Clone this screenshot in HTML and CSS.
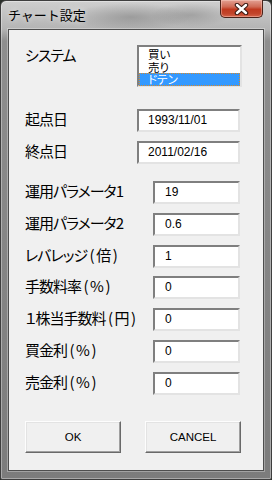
FILE: index.html
```html
<!DOCTYPE html>
<html lang="ja">
<head>
<meta charset="utf-8">
<title>チャート設定</title>
<link rel="stylesheet" href="styles.css">
</head>
<body>
<div class="window">
  <div class="titlebar">
    <span class="title">チャート設定</span>
    <div class="close">
      <svg width="15" height="12" viewBox="0 0 15 12">
        <path d="M3 2 L12 10 M12 2 L3 10" stroke="#3a1a14" stroke-width="4.5" stroke-linecap="round"/>
        <path d="M3 2 L12 10 M12 2 L3 10" stroke="#ffffff" stroke-width="2.4" stroke-linecap="round"/>
      </svg>
    </div>
  </div>
  <div class="client">
    <div class="row row-system">
      <span class="label label-date">システム</span>
      <div class="listbox">
        <div class="item">買い</div>
        <div class="item">売り</div>
        <div class="item selected">ドテン</div>
      </div>
    </div>
    <div class="group group-dates">
      <div class="row">
        <span class="label label-date">起点日</span>
        <div class="field field-date">1993/11/01</div>
      </div>
      <div class="row">
        <span class="label label-date">終点日</span>
        <div class="field field-date">2011/02/16</div>
      </div>
    </div>
    <div class="group group-params">
      <div class="row">
        <span class="label label-param">運用パラメータ1</span>
        <div class="field field-param">19</div>
      </div>
      <div class="row">
        <span class="label label-param">運用パラメータ2</span>
        <div class="field field-param">0.6</div>
      </div>
      <div class="row">
        <span class="label label-param">レバレッジ<span class="paren">(</span>倍<span class="paren">)</span></span>
        <div class="field field-param">1</div>
      </div>
      <div class="row">
        <span class="label label-param">手数料率<span class="paren">(</span>%<span class="paren">)</span></span>
        <div class="field field-param">0</div>
      </div>
      <div class="row">
        <span class="label label-param">１株当手数料<span class="paren">(</span>円<span class="paren">)</span></span>
        <div class="field field-param">0</div>
      </div>
      <div class="row">
        <span class="label label-param">買金利<span class="paren">(</span>%<span class="paren">)</span></span>
        <div class="field field-param">0</div>
      </div>
      <div class="row">
        <span class="label label-param">売金利<span class="paren">(</span>%<span class="paren">)</span></span>
        <div class="field field-param">0</div>
      </div>
    </div>
    <div class="buttons">
      <div class="button">OK</div>
      <div class="button">CANCEL</div>
    </div>
  </div>
</div>
</body>
</html>
```
FILE: styles.css
```css
html, body {
  margin: 0;
  padding: 0;
  width: 272px;
  height: 480px;
  overflow: hidden;
  background: #2a2f2a;
}

.window {
  box-sizing: border-box;
  width: 272px;
  height: 480px;
  display: flex;
  flex-direction: column;
  border: 1px solid #3e3e3e;
  border-radius: 6px 6px 2px 2px;
  background:
    radial-gradient(ellipse 60px 14px at 130px 16px, rgba(90,90,90,0.35), rgba(90,90,90,0)),
    radial-gradient(ellipse 40px 12px at 190px 14px, rgba(90,90,90,0.3), rgba(90,90,90,0)),
    linear-gradient(to bottom, #cfcfcf 0, #b4b4b4 28px, #8e8e8e 40px, #7c7c7c 100%);
  box-shadow: inset 0 0 0 1px rgba(255,255,255,0.35);
}

.titlebar {
  height: 28px;
  display: flex;
  justify-content: space-between;
  align-items: flex-start;
  padding: 0 8px 0 7px;
  flex-shrink: 0;
}

.title {
  margin-top: 6px;
  font-family: "Noto Sans CJK JP", sans-serif;
  font-size: 13px;
  line-height: 15px;
  color: #000;
  text-shadow: 0 0 6px rgba(255,255,255,0.8);
}

.close {
  width: 43px;
  height: 18px;
  margin-top: -1px;
  box-sizing: border-box;
  border: 1px solid #4a2219;
  border-top: none;
  border-radius: 0 0 5px 5px;
  background: linear-gradient(to bottom, #e3a193 0, #cf6a55 40%, #c0391f 55%, #c2452b 80%, #d5634a 100%);
  box-shadow: inset 0 0 0 1px rgba(255,220,210,0.4);
  display: flex;
  align-items: center;
  justify-content: center;
}

.client {
  flex: 1;
  margin: 0 7px 8px 7px;
  background: #f0f0f0;
  border: 1px solid #4e4e4e;
  box-shadow: 0 0 0 1px rgba(255,255,255,0.3);
  padding: 15px 0 0 16px;
  display: flex;
  flex-direction: column;
  font-family: "Noto Sans CJK JP", sans-serif;
}

.row {
  display: flex;
  align-items: flex-start;
}

.label {
  font-size: 15px;
  line-height: 18px;
  padding-top: 1px;
  color: #000;
  font-feature-settings: "palt";
  letter-spacing: -1px;
  white-space: nowrap;
}

.paren {
  margin: 0 2.5px;
}

.label-date {
  width: 112px;
  flex-shrink: 0;
}

.label-param {
  width: 128px;
  flex-shrink: 0;
}

.listbox {
  box-sizing: border-box;
  width: 105px;
  height: 42px;
  background: #fff;
  border-style: solid;
  border-width: 2px;
  border-color: #7f7f7f #e3e3e3 #e3e3e3 #7f7f7f;
  display: flex;
  flex-direction: column;
  padding-top: 1px;
}

.item {
  height: 12.5px;
  font-size: 11.5px;
  line-height: 12.5px;
  padding-left: 9px;
  color: #000;
  font-feature-settings: "palt";
}

.item.selected {
  background: #3399ff;
  color: #fff;
  outline: 1px dotted #d88a2a;
  outline-offset: -1px;
}

.group-dates {
  margin-top: 22px;
  display: flex;
  flex-direction: column;
  gap: 9px;
}

.group-params {
  margin-top: 17px;
  display: flex;
  flex-direction: column;
  gap: 8.8px;
}

.field {
  box-sizing: border-box;
  height: 23px;
  background: #fff;
  border-style: solid;
  border-width: 2px;
  border-color: #7f7f7f #e3e3e3 #e3e3e3 #7f7f7f;
  font-family: "Liberation Sans", Arial, sans-serif;
  font-size: 12px;
  line-height: 19px;
  color: #000;
}

.field-date {
  width: 103px;
  padding-left: 9px;
}

.field-param {
  width: 87px;
  padding-left: 10px;
}

.buttons {
  margin-top: 26px;
  display: flex;
  gap: 24px;
}

.button {
  box-sizing: border-box;
  width: 96px;
  height: 32px;
  background: #f0f0f0;
  border-style: solid;
  border-width: 1px;
  border-color: #fdfdfd #696969 #696969 #fdfdfd;
  box-shadow: inset -1px -1px 0 #a0a0a0, inset 1px 1px 0 #e3e3e3;
  display: flex;
  align-items: center;
  justify-content: center;
  font-family: "Liberation Sans", Arial, sans-serif;
  font-size: 11.5px;
  color: #000;
}
```
